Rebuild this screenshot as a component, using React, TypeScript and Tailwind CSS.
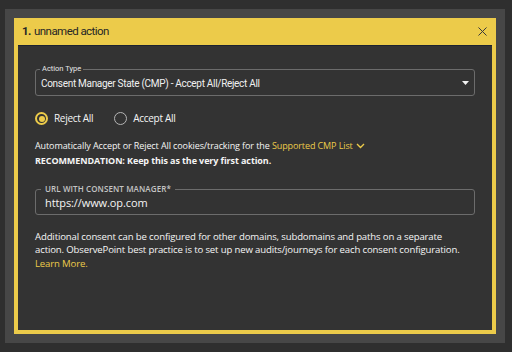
import { X } from "lucide-react";

export default function App() {
  return (
    <div className="h-[352px] w-[512px] bg-[#2f2f2f] pt-[9px] pl-[5px]">
      <div className="w-[500px] h-[334px] bg-[#474747] p-[9px]">
        <div className="flex h-full flex-col bg-[#eccb4a] px-[4px] pb-[4px]">
          {/* Header */}
          <div className="flex h-[27px] shrink-0 items-center justify-between pl-[4px] pr-[2px] text-[#262626] font-['Roboto',sans-serif]">
            <div className="flex items-center pt-[1px] text-[11.5px] tracking-[-0.55px]">
              <span className="font-bold w-[12px]">1.</span>
              <span>unnamed action</span>
            </div>
            <X className="w-[15px] h-[15px] text-[#3a3a3a]" strokeWidth={1.6} />
          </div>

          {/* Body */}
          <div className="flex-1 border-t border-[#1d2330] bg-[#333333] px-[17px] pt-[23px] text-[#f5f5f5] font-['Open_Sans',sans-serif]">
            {/* Select */}
            <div className="relative flex h-[27px] items-center justify-between rounded-[3px] border border-[#6c6c6c] pl-[5px] pr-[5px]">
              <span className="absolute -top-[6px] left-[4px] bg-[#333333] px-[2px] text-[7.5px] leading-[10px] text-[#e6e6e6] font-['Roboto',sans-serif]">
                Action Type
              </span>
              <span className="pt-[1px] text-[10px] tracking-[-0.3px] text-[#f0f0f0] font-['Roboto',sans-serif]">
                Consent Manager State (CMP) - Accept All/Reject All
              </span>
              <svg width="7" height="4" viewBox="0 0 7 4" className="mt-[1px]">
                <path d="M0 0 L7 0 L3.5 4 Z" fill="#f2f2f2" />
              </svg>
            </div>

            {/* Radios */}
            <div className="mt-[15px] flex items-center text-[10px] tracking-[-0.3px]">
              <div className="flex items-center">
                <span className="flex h-[13px] w-[13px] items-center justify-center rounded-full border-2 border-[#eccb4a]">
                  <span className="h-[6px] w-[6px] rounded-full bg-[#eccb4a]" />
                </span>
                <span className="ml-[6px]">Reject All</span>
              </div>
              <div className="ml-[21px] flex items-center">
                <span className="h-[13px] w-[13px] rounded-full border-[1.5px] border-[#b5b5b5]" />
                <span className="ml-[6px]">Accept All</span>
              </div>
            </div>

            {/* Info */}
            <div className="mt-[12px] text-[9px] leading-[15px] tracking-[-0.1px]">
              <div className="flex items-center">
                <span>Automatically Accept or Reject All cookies/tracking for the&nbsp;</span>
                <span className="text-[#eccb4a]">Supported CMP List</span>
                <svg width="9" height="6" viewBox="0 0 9 6" className="ml-[3px]">
                  <path d="M1 1 L4.5 4.5 L8 1" fill="none" stroke="#eccb4a" strokeWidth="1.4" />
                </svg>
              </div>
              <div className="font-bold">RECOMMENDATION: Keep this as the very first action.</div>
            </div>

            {/* URL input */}
            <div className="relative mt-[21px] flex h-[26px] items-center rounded-[3px] border border-[#6c6c6c] pl-[9px]">
              <span className="absolute -top-[6px] left-[5px] bg-[#333333] px-[4px] text-[8px] font-semibold leading-[10px] tracking-[0.1px] text-[#c4c4c4]">
                URL WITH CONSENT MANAGER*
              </span>
              <span className="pt-[2px] text-[11px] tracking-[-0.1px] text-[#f5f5f5]">https://www.op.com</span>
            </div>

            {/* Paragraph */}
            <p className="mt-[15px] text-[9.6px] leading-[13.3px] tracking-[-0.15px]">
              Additional consent can be configured for other domains, subdomains and paths on a separate
              <br />
              action. ObservePoint best practice is to set up new audits/journeys for each consent configuration.
              <br />
              <span className="text-[#eccb4a]">Learn More.</span>
            </p>
          </div>
        </div>
      </div>
    </div>
  );
}
